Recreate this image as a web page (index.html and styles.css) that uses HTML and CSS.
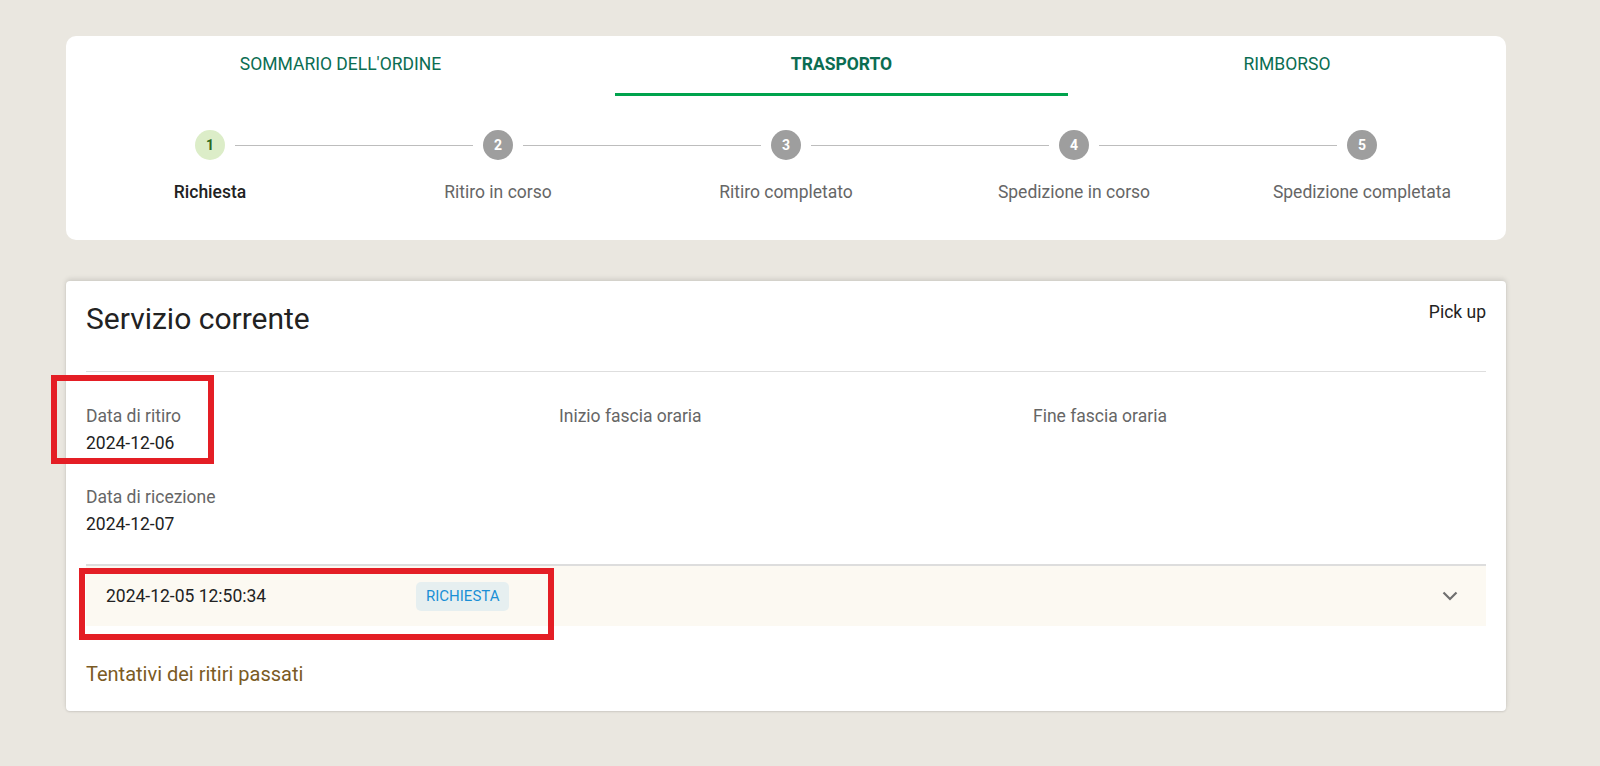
FILE: index.html
```html
<!DOCTYPE html>
<html lang="it">
<head>
<meta charset="utf-8">
<title>Trasporto</title>
<link rel="stylesheet" href="styles.css">
</head>
<body>
<div class="page">
  <section class="card progress-card">
    <nav class="tabs">
      <div class="tab tab-1">SOMMARIO DELL'ORDINE</div>
      <div class="tab tab-2 active">TRASPORTO</div>
      <div class="tab tab-3">RIMBORSO</div>
    </nav>
    <div class="stepper">
      <div class="circles">
        <span class="dot done">1</span><span class="line"></span>
        <span class="dot">2</span><span class="line"></span>
        <span class="dot">3</span><span class="line"></span>
        <span class="dot">4</span><span class="line"></span>
        <span class="dot">5</span>
      </div>
      <div class="labels">
        <span class="label current">Richiesta</span>
        <span class="label">Ritiro in corso</span>
        <span class="label">Ritiro completato</span>
        <span class="label">Spedizione in corso</span>
        <span class="label">Spedizione completata</span>
      </div>
    </div>
  </section>

  <section class="card service-card">
    <header class="service-head">
      <h1 class="service-title">Servizio corrente</h1>
      <span class="service-type">Pick up</span>
    </header>
    <div class="fields">
      <div class="field">
        <div class="f-label">Data di ritiro</div>
        <div class="f-value">2024-12-06</div>
      </div>
      <div class="field">
        <div class="f-label">Inizio fascia oraria</div>
      </div>
      <div class="field">
        <div class="f-label">Fine fascia oraria</div>
      </div>
      <div class="field field-2">
        <div class="f-label">Data di ricezione</div>
        <div class="f-value">2024-12-07</div>
      </div>
    </div>
    <div class="history-row">
      <span class="h-date">2024-12-05 12:50:34</span>
      <span class="badge">RICHIESTA</span>
      <svg class="chevron" width="16" height="10" viewBox="0 0 16 10"><path d="M1.5 1.5l6.5 6.5 6.5-6.5" fill="none" stroke="#6f6f6f" stroke-width="2.2"/></svg>
    </div>
    <div class="past">Tentativi dei ritiri passati</div>
  </section>

  <div class="mark mark-1"></div>
  <div class="mark mark-2"></div>
</div>
</body>
</html>
```
FILE: styles.css
```css
* { box-sizing: border-box; }
html, body { margin: 0; padding: 0; }
body {
  background: #eae7e0;
  font-family: Roboto, "Liberation Sans", Arial, sans-serif;
  color: #222;
  width: 1600px;
  height: 766px;
  overflow: hidden;
}
.page {
  position: relative;
  width: 1440px;
  margin-left: 66px;
  padding-top: 36px;
}
.card {
  background: #fff;
  border-radius: 10px;
}
.tabs {
  display: grid;
  grid-template-columns: 549px 453px 438px;
}
.tab {
  text-align: center;
  font-size: 17.5px;
  line-height: 20px;
  color: #0b6d52;
  padding: 18px 0 19px;
  border-bottom: 3px solid transparent;
}
.tab.active {
  font-weight: 700;
  border-bottom-color: #00a34d;
}
.stepper {
  padding: 34px 0 38px;
}
.circles {
  display: flex;
  align-items: center;
  padding: 0 129px;
}
.dot {
  width: 30px;
  height: 30px;
  flex: 0 0 30px;
  border-radius: 50%;
  background: #9e9e9e;
  color: #fff;
  font-size: 14px;
  font-weight: 700;
  display: flex;
  align-items: center;
  justify-content: center;
}
.dot.done {
  background: #dcedc8;
  color: #2d6a1f;
}
.line {
  flex: 1;
  height: 1px;
  background: #bdbdbd;
  margin: 0 10px;
}
.labels {
  display: grid;
  grid-template-columns: repeat(5, 1fr);
  margin-top: 22px;
}
.label {
  text-align: center;
  font-size: 17.5px;
  line-height: 20px;
  color: #666;
}
.label.current {
  color: #222;
  font-weight: 500;
}
.service-card {
  margin-top: 41px;
  border-radius: 4px;
  padding: 20px 20px 25px;
  box-shadow: 0 -2px 5px rgba(0,0,0,0.12), 0 1px 2px rgba(0,0,0,0.1);
}
.service-head {
  display: flex;
  justify-content: space-between;
  align-items: flex-start;
  padding-bottom: 34px;
  border-bottom: 1px solid #dedede;
}
.service-title {
  margin: 0;
  font-size: 30px;
  font-weight: 400;
  line-height: 36px;
  color: #222;
}
.service-type {
  font-size: 17.5px;
  line-height: 20px;
  margin-top: 1px;
  color: #222;
}
.fields {
  display: grid;
  grid-template-columns: 473px 474px 1fr;
  padding-top: 32px;
}
.field-2 {
  grid-column: 1 / 2;
  margin-top: 30px;
}
.f-label {
  font-size: 17.5px;
  line-height: 24px;
  color: #666;
}
.f-value {
  font-size: 17.5px;
  line-height: 24px;
  margin-top: 3px;
  color: #222;
}
.history-row {
  margin-top: 28px;
  border-top: 2px solid #dddddd;
  background: #fcf9f2;
  height: 62px;
  display: flex;
  align-items: center;
  padding: 0 28px 0 20px;
}
.h-date {
  width: 310px;
  font-size: 17.5px;
  color: #222;
}
.badge {
  background: #e6eff0;
  color: #1a8fd6;
  font-size: 15px;
  line-height: 29px;
  padding: 0 10px;
  border-radius: 5px;
}
.chevron {
  margin-left: auto;
}
.past {
  margin-top: 36px;
  font-size: 20px;
  line-height: 24px;
  color: #7b5b24;
}
.mark {
  position: absolute;
  border: 6px solid #e41e25;
}
.mark-1 {
  left: -15px;
  top: 375px;
  width: 163px;
  height: 89px;
}
.mark-2 {
  left: 13px;
  top: 568px;
  width: 475px;
  height: 72px;
}
```
